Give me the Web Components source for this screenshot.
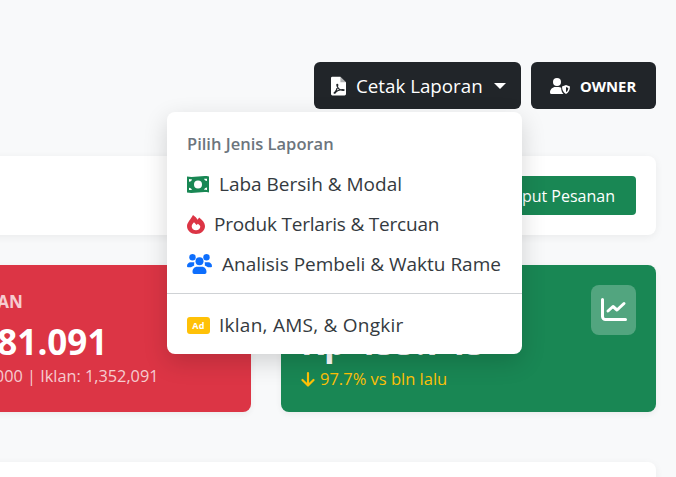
<!DOCTYPE html>
<html>
<head>
<meta charset="utf-8">
<style>
  html, body { margin: 0; height: 100%; overflow: hidden; background: #f8f9fa; }
  body { font-family: "Open Sans", "Noto Sans", sans-serif; color: #212529; }
</style>
</head>
<body>
<template id="icons">
  <svg data-name="pdf" viewBox="0 0 16 20"><path fill="#fff" d="M1.500 0H10l6 6v12.500a1.500 1.500 0 0 1-1.500 1.500h-13A1.500 1.500 0 0 1 0 18.500v-17A1.500 1.500 0 0 1 1.500 0z"/><path fill="#212529" d="M10 0v6h6z" opacity=".35"/><path fill="none" stroke="#212529" stroke-width="1.300" d="M3 17.500c2-1 4-5 4.200-8.500 0-1-1-1-1 0 .2 3 3.500 6 7 5.800 1 0 1-1 0-1-3-.1-7 1-9 3.700z"/></svg>
  <svg data-name="owner" viewBox="0 0 20 16"><circle cx="7" cy="4" r="4" fill="#fff"/><path fill="#fff" d="M0 14.500C0 11.400 2.500 9 5.500 9h3c1 0 1.900.3 2.700.7-.1 2.300.7 4.800 2.300 6.300H1.500A1.500 1.500 0 0 1 0 14.500z"/><path fill="#fff" d="M16 7l4 1.600c0 3.400-1.400 6-4 7.400-2.600-1.400-4-4-4-7.400z"/><path fill="#212529" d="M16 9l2.300 1c-.1 1.900-.9 3.300-2.300 4.100z"/></svg>
  <svg data-name="money" viewBox="0 0 22 17"><path fill="#198754" d="M0 .6c7.500 1.200 14.500-1.300 22-.2v16c-7.500-1.200-14.500 1.300-22 .2z"/><circle cx="11" cy="8.500" r="4" fill="#fff"/><path fill="#fff" d="M2 3c1 .2 1.900.3 2.900.3 0 1.300-1.300 2.500-2.900 2.400zM20 2.800c-1-.1-1.900-.1-2.900 0 .1 1.200 1.300 2.300 2.900 2.300zM2 11.700c1.600 0 2.800 1.100 2.900 2.400-1 0-1.900-.1-2.900-.2zM20 11.400c-1.600 0-2.800 1.100-2.900 2.400 1 0 1.900 0 2.900.1z"/></svg>
  <svg data-name="fire" viewBox="0 0 18 19"><path fill="#dc3545" d="M6 0c2.200 1.500 3.700 3 4.500 4.700.7-.8 1.300-1.500 1.600-2.200C15.400 4.800 18 8 18 11c0 4.500-3.900 8-9 8s-9-3.500-9-8C0 7.600 3.800 4.200 6 0z"/><path fill="#fff" d="M9 15.300c-2.400 0-4.300-1.700-4.300-3.900 0-1.500 1.100-2.800 2.300-4.200 1 1 1.900 2 2.600 2.900.4-.5.800-1 1.200-1.400 1.400 1 2.500 1.900 2.500 3C13.300 13.600 11.400 15.300 9 15.300z"/></svg>
  <svg data-name="users" viewBox="0 0 25 20"><g fill="#0d6efd"><circle cx="5.500" cy="3.300" r="3.200"/><circle cx="19.500" cy="3.300" r="3.200"/><circle cx="12.500" cy="7.200" r="4"/><path d="M0 12.200c0-2.200 1.600-3.900 3.600-3.900h2.600c.4 0 .8.100 1.200.2-.3.900-.5 2-.2 3.100L4 13.200H1a1 1 0 0 1-1-1zM25 12.200c0-2.200-1.600-3.900-3.600-3.900h-2.600c-.4 0-.8.100-1.200.2.300.9.500 2 .2 3.100L21 13.200h3a1 1 0 0 0 1-1zM10 12.800h5c2.500 0 4.500 2.200 4.500 5a2 2 0 0 1-1.500 2.200H7a2 2 0 0 1-1.500-2.200c0-2.800 2-5 4.500-5z"/></g></svg>
  <svg data-name="chart" viewBox="0 0 26 24"><path fill="none" stroke="#fff" stroke-width="3" stroke-linecap="round" stroke-linejoin="round" d="M1.500 1.500v17a3 3 0 0 0 3 3h20M7 13l5-4.500 4 3.500 7-6.500"/></svg>
  <svg data-name="down" viewBox="0 0 14 15"><path fill="none" stroke="#ffc107" stroke-width="2.200" stroke-linecap="round" stroke-linejoin="round" d="M7 1.200v12M1.500 8L7 13.500 12.500 8"/></svg>
</template>

<report-page></report-page>

<script>
const iconBank = document.getElementById('icons').content;

class IconGlyph extends HTMLElement {
  connectedCallback() {
    if (this.shadowRoot) return;
    this.attachShadow({ mode: 'open' });
    const w = this.getAttribute('w'), h = this.getAttribute('h');
    this.shadowRoot.innerHTML = `<style>
      :host { display: inline-flex; flex: none; width: ${w}px; height: ${h}px; }
      svg { width: 100%; height: 100%; display: block; }
    </style>`;
    const svg = iconBank.querySelector(`[data-name="${this.getAttribute('name')}"]`);
    this.shadowRoot.appendChild(svg.cloneNode(true));
  }
}

class DarkButton extends HTMLElement {
  constructor() {
    super();
    this.attachShadow({ mode: 'open' });
    this.shadowRoot.innerHTML = `<style>
      :host { display: inline-flex; align-items: center; height: 47px; box-sizing: border-box;
        background: #212529; color: #fff; border-radius: 6px; white-space: nowrap; }
    </style><slot></slot>`;
  }
}

class ReportMenu extends HTMLElement {
  constructor() {
    super();
    this.attachShadow({ mode: 'open' });
    this.shadowRoot.innerHTML = `<style>
      :host { display: block; position: absolute; left: 167px; top: 112px; width: 355px; height: 242px;
        box-sizing: border-box; padding-top: 16px; background: #fff; border-radius: 8px;
        box-shadow: 0 8px 24px rgba(0,0,0,.16); color: #343a40; z-index: 5; }
      .head { height: 32px; line-height: 32px; margin-bottom: 4px; padding-left: 20px; font-size: 16.500px; font-weight: 600; color: #6c757d; }
      hr { border: 0; border-top: 1px solid #cfd2d5; margin: 9px 0 11px; }
    </style>
    <div class="head">Pilih Jenis Laporan</div>
    <slot name="top"></slot>
    <hr>
    <slot name="bottom"></slot>`;
  }
}

class MenuRow extends HTMLElement {
  constructor() {
    super();
    this.attachShadow({ mode: 'open' });
    this.shadowRoot.innerHTML = `<style>
      :host { display: flex; align-items: center; height: 40px; padding-left: 20px; font-size: 19px; gap: var(--gap, 8px); white-space: nowrap; }
    </style><slot></slot>`;
  }
}

class StatCard extends HTMLElement {
  constructor() {
    super();
    this.attachShadow({ mode: 'open' });
    this.shadowRoot.innerHTML = `<style>
      :host { display: block; position: relative; height: 147px; box-sizing: border-box; padding: 25px 20px 0;
        border-radius: 8px; color: #fff; background: var(--bg); box-shadow: 0 2px 6px rgba(0,0,0,.06); overflow: hidden; }
      .label { height: 24px; line-height: 24px; font-size: 17px; font-weight: 700; opacity: .75; white-space: nowrap; }
      .value { height: 46px; line-height: 46px; margin-top: 5px; font-size: 35px; font-weight: 700; white-space: nowrap; }
      .note { height: 24px; line-height: 24px; margin-top: var(--note-shift, 0);
        font-size: var(--note-size, 16px); white-space: nowrap; color: var(--note); }
      ::slotted([slot=note]) { display: flex; align-items: center; gap: 5px; }
      ::slotted([slot=badge]) { position: absolute; right: 20px; top: 20px; }
    </style>
    <div class="label"><slot name="label"></slot></div>
    <div class="value"><slot name="value"></slot></div>
    <div class="note"><slot name="note"></slot></div>
    <slot name="badge"></slot>`;
  }
}

class IconBadge extends HTMLElement {
  constructor() {
    super();
    this.attachShadow({ mode: 'open' });
    this.shadowRoot.innerHTML = `<style>
      :host { display: flex; align-items: center; justify-content: center; width: 45px; height: 50px;
        border-radius: 8px; background: rgba(255,255,255,.25); }
    </style><slot></slot>`;
  }
}

class ReportPage extends HTMLElement {
  constructor() {
    super();
    this.attachShadow({ mode: 'open' });
    this.shadowRoot.innerHTML = `<style>
      :host { display: block; height: 477px; overflow: hidden; }
      .wrap { display: flex; flex-direction: column; margin-left: -124px; width: 780px; padding-top: 62px; }
      .bar { display: flex; justify-content: flex-end; gap: 10px; }
      .print { width: 207px; padding-left: 17px; gap: 10px; font-size: 18.750px; }
      .caret { width: 0; height: 0; margin-left: 1px; border: 6px solid transparent; border-top-color: #fff; border-bottom: 0; }
      .owner { width: 125px; padding-left: 19px; gap: 10px; font-size: 14.800px; font-weight: 700; }
      .panel { display: flex; justify-content: flex-end; align-items: flex-start; height: 79px; margin-top: 47px; padding: 20px 20px 0 0;
        box-sizing: border-box; background: #fff; border-radius: 8px; box-shadow: 0 2px 8px rgba(0,0,0,.06); }
      .cta { display: flex; align-items: center; height: 39px; padding: 0 21px; border-radius: 4px; background: #198754; color: #fff; font-size: 16px; }
      .stats { display: grid; grid-template-columns: 375px 375px; gap: 30px; margin-top: 30px; }
      .table { height: 80px; margin-top: 50px; background: #fff; border-radius: 8px; box-shadow: 0 2px 8px rgba(0,0,0,.06); }
      .ad { display: flex; align-items: center; justify-content: center; flex: none; width: 23px; height: 17px; border-radius: 3px;
        background: #ffc107; color: #fff; font-size: 9px; font-weight: 700; letter-spacing: .4px; }
      .tight { letter-spacing: -.2px; }
      .loose { letter-spacing: .25px; }
      .pull { display: inline-block; margin-left: -3px; }
    </style>
    <div class="wrap">
      <div class="bar">
        <dark-button class="print"><icon-glyph name="pdf" w="15" h="20"></icon-glyph>Cetak Laporan<span class="caret"></span></dark-button>
        <dark-button class="owner"><icon-glyph name="owner" w="20" h="16"></icon-glyph>OWNER</dark-button>
      </div>
      <div class="panel"><div class="cta">Input Pesanan</div></div>
      <div class="stats">
        <stat-card style="--bg:#dc3545;--note:rgba(255,255,255,.75);--note-shift:-1px;--note-size:16.300px">
          <span slot="label">PENGELUARAN</span>
          <span slot="value" class="pull">Rp 1.381.091</span>
          <span slot="note">Modal Rp 29,000 | Iklan: 1,352,091</span>
        </stat-card>
        <stat-card style="--bg:#198754;--note:#ffc107;--note-shift:2px;--note-size:16.500px">
          <span slot="label">LABA BERSIH</span>
          <span slot="value">Rp 433.743</span>
          <span slot="note"><icon-glyph name="down" w="14" h="15"></icon-glyph>97.7% vs bln lalu</span>
          <icon-badge slot="badge"><icon-glyph name="chart" w="26" h="24"></icon-glyph></icon-badge>
        </stat-card>
      </div>
      <div class="table"></div>
    </div>
    <report-menu>
      <menu-row slot="top" style="--gap:10px"><icon-glyph name="money" w="22" h="17"></icon-glyph>Laba Bersih &amp; Modal</menu-row>
      <menu-row slot="top" style="--gap:9px"><icon-glyph name="fire" w="18" h="19"></icon-glyph><span class="tight">Produk Terlaris &amp; Tercuan</span></menu-row>
      <menu-row slot="top" style="--gap:10px"><icon-glyph name="users" w="25" h="20"></icon-glyph>Analisis Pembeli &amp; Waktu Rame</menu-row>
      <menu-row slot="bottom" style="--gap:9px"><span class="ad">Ad</span><span class="loose">Iklan, AMS, &amp; Ongkir</span></menu-row>
    </report-menu>`;
  }
}

customElements.define('icon-glyph', IconGlyph);
customElements.define('dark-button', DarkButton);
customElements.define('report-menu', ReportMenu);
customElements.define('menu-row', MenuRow);
customElements.define('stat-card', StatCard);
customElements.define('icon-badge', IconBadge);
customElements.define('report-page', ReportPage);
</script>
</body>
</html>
